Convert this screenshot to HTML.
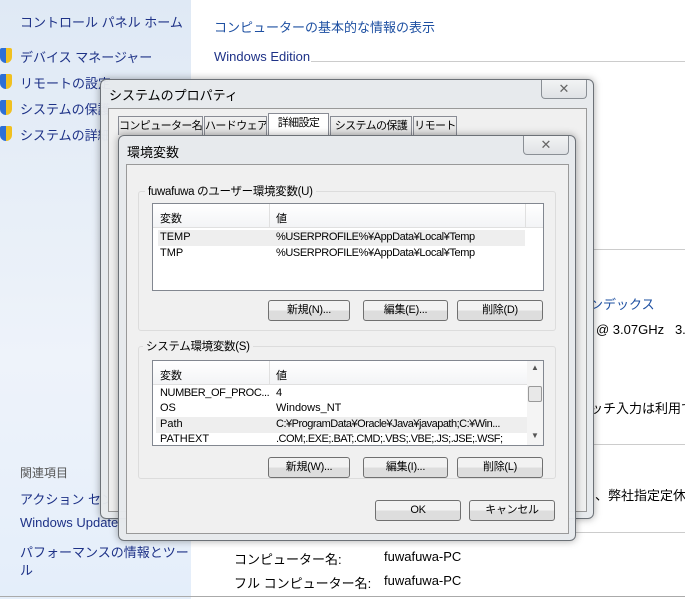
<!DOCTYPE html><html><head><meta charset="utf-8"><style>
*{margin:0;padding:0;box-sizing:border-box}
body{width:685px;height:599px;overflow:hidden;position:relative;background:#fff;font-family:"Liberation Sans","Noto Sans CJK JP",sans-serif;font-size:12px;color:#000}
.a{position:absolute;white-space:nowrap}
.left{position:absolute;left:0;top:0;width:191px;height:599px;background:linear-gradient(#dfe9f5,#eef3fa 60%,#e4eefa)}
.lk{color:#1e3287;font-size:13px}
.sh{position:absolute;left:0;width:12px;height:15px;background:linear-gradient(90deg,#2d6fd6 50%,#f0c020 50%);border-radius:2px 2px 6px 6px}
.frame{position:absolute;background:rgba(230,233,236,.97);border:1px solid #6c7177;border-radius:6px;box-shadow:0 0 8px rgba(0,0,0,.35)}
.client{position:absolute;background:#f0f0f0;border:1px solid #999}
.xb{position:absolute;width:46px;height:19px;border:1px solid #8a8f95;border-top:none;border-radius:0 0 4px 4px;background:linear-gradient(#f2f3f4,#dfe2e5);text-align:center;font-size:13px;line-height:17px;color:#666}
.btn{position:absolute;height:21px;border:1px solid #707070;border-radius:3px;background:linear-gradient(#f2f2f2 50%,#dddddd 50%);text-align:center;line-height:19px;font-size:11px;letter-spacing:-.3px}
.grp{position:absolute;border:1px solid #dcdcdc;border-radius:3px}
.gl{position:absolute;background:#f0f0f0;padding:0 3px;top:-9px;left:6px;font-size:11.5px;letter-spacing:-.3px}
.lv{position:absolute;background:#fff;border:1px solid #828790;overflow:hidden;font-size:11px}
.lv .a{overflow:hidden}
.hd{position:absolute;left:0;top:0;height:24px;background:linear-gradient(#fff,#f3f4f6);border-bottom:1px solid #e0e0e0}
.tab{position:absolute;top:116px;height:19px;border:1px solid #898c95;border-bottom:none;background:linear-gradient(#f2f2f2,#e0e0e0);font-size:11px;line-height:18px;text-align:center;letter-spacing:-.6px;overflow:hidden;white-space:nowrap}
</style></head><body>
<div class="left"></div>
<div class="a" style="left:20px;top:12px;font-size:13px;color:#1e3287">コントロール パネル ホーム</div>
<div class="sh" style="top:48px"></div><div class="a lk" style="left:20px;top:47px">デバイス マネージャー</div>
<div class="sh" style="top:74px"></div><div class="a lk" style="left:20px;top:73px">リモートの設定</div>
<div class="sh" style="top:100px"></div><div class="a lk" style="left:20px;top:99px">システムの保護</div>
<div class="sh" style="top:126px"></div><div class="a lk" style="left:20px;top:125px">システムの詳細</div>
<div class="a" style="left:20px;top:464px;color:#555;font-size:12px">関連項目</div>
<div class="a lk" style="left:20px;top:489px">アクション センター</div>
<div class="a lk" style="left:20px;top:515px">Windows Update</div>
<div class="a lk" style="left:20px;top:542px">パフォーマンスの情報とツー</div>
<div class="a lk" style="left:20px;top:560px">ル</div>
<div class="a" style="left:214px;top:17px;font-size:13px;color:#1e50a2">コンピューターの基本的な情報の表示</div>
<div class="a" style="left:214px;top:49px;font-size:13px;color:#1e3287">Windows Edition</div>
<div class="a" style="left:311px;top:61px;width:374px;border-top:1px solid #ccc"></div>
<div class="a" style="left:590px;top:249px;width:95px;border-top:1px solid #ccc"></div>
<div class="a" style="left:590px;top:294px;font-size:13px;color:#1e50a2">ンデックス</div>
<div class="a" style="left:596px;top:322px;font-size:13px">@ 3.07GHz &nbsp; 3.0</div>
<div class="a" style="left:590px;top:398px;font-size:13px">ッチ入力は利用で</div>
<div class="a" style="left:590px;top:444px;width:95px;border-top:1px solid #ccc"></div>
<div class="a" style="left:595px;top:485px;font-size:13px">、弊社指定定休日</div>
<div class="a" style="left:190px;top:532px;width:495px;border-top:1px solid #ccc"></div>
<div class="a" style="left:234px;top:549px;font-size:13px">コンピューター名:</div>
<div class="a" style="left:384px;top:549px;font-size:13px">fuwafuwa-PC</div>
<div class="a" style="left:234px;top:573px;font-size:13px">フル コンピューター名:</div>
<div class="a" style="left:384px;top:573px;font-size:13px">fuwafuwa-PC</div>
<div class="a" style="left:0;top:596px;width:685px;border-top:1px solid #aaa"></div>

<div class="frame" style="left:100px;top:79px;width:494px;height:440px">
 <div class="a" style="left:8px;top:5px;font-size:13px">システムのプロパティ</div>
 <div class="xb" style="left:440px;top:0">✕</div>
 <div class="client" style="left:7px;top:28px;width:479px;height:404px"></div>
</div>
<div class="tab" style="left:118px;width:85px">コンピューター名</div>
<div class="tab" style="left:204px;width:63px">ハードウェア</div>
<div class="tab" style="left:268px;top:113px;height:22px;width:61px;background:#fff">詳細設定</div>
<div class="tab" style="left:330px;width:82px">システムの保護</div>
<div class="tab" style="left:413px;width:44px">リモート</div>

<div class="frame" style="left:118px;top:135px;width:458px;height:406px">
 <div class="a" style="left:8px;top:6px;font-size:13px">環境変数</div>
 <div class="xb" style="left:404px;top:0">✕</div>
 <div class="client" style="left:7px;top:28px;width:443px;height:370px"></div>
</div>
<div class="grp" style="left:138px;top:191px;width:418px;height:140px"><div class="gl">fuwafuwa のユーザー環境変数(U)</div></div>
<div class="lv" style="left:152px;top:203px;width:392px;height:88px">
 <div class="hd" style="width:390px"></div>
 <div class="a" style="left:116px;top:0;height:24px;border-left:1px solid #e0e0e0"></div>
 <div class="a" style="left:372px;top:0;height:24px;border-left:1px solid #e0e0e0"></div>
 <div class="a" style="left:7px;top:6px">変数</div><div class="a" style="left:123px;top:6px">値</div>
 <div class="a" style="left:5px;top:26px;width:367px;height:16px;background:#eeeeee"></div>
 <div class="a" style="left:7px;top:27px">TEMP</div><div class="a" style="left:123px;top:27px;letter-spacing:-.4px">%USERPROFILE%¥AppData¥Local¥Temp</div>
 <div class="a" style="left:7px;top:43px">TMP</div><div class="a" style="left:123px;top:43px;letter-spacing:-.4px">%USERPROFILE%¥AppData¥Local¥Temp</div>
</div>
<div class="btn" style="left:268px;top:300px;width:82px">新規(N)...</div>
<div class="btn" style="left:363px;top:300px;width:85px">編集(E)...</div>
<div class="btn" style="left:457px;top:300px;width:86px">削除(D)</div>

<div class="grp" style="left:138px;top:346px;width:418px;height:133px"><div class="gl" style="left:4px">システム環境変数(S)</div></div>
<div class="lv" style="left:152px;top:360px;width:392px;height:86px">
 <div class="hd" style="width:375px"></div>
 <div class="a" style="left:116px;top:0;height:24px;border-left:1px solid #e0e0e0"></div>
 <div class="a" style="left:7px;top:6px">変数</div><div class="a" style="left:123px;top:6px">値</div>
 <div class="a" style="left:7px;top:26px;width:110px;letter-spacing:-.4px">NUMBER_OF_PROC...</div><div class="a" style="left:123px;top:26px">4</div>
 <div class="a" style="left:7px;top:41px">OS</div><div class="a" style="left:123px;top:41px">Windows_NT</div>
 <div class="a" style="left:3px;top:56px;width:371px;height:16px;background:#eeeeee"></div>
 <div class="a" style="left:7px;top:57px">Path</div><div class="a" style="left:123px;top:57px;width:250px;letter-spacing:-.5px">C:¥ProgramData¥Oracle¥Java¥javapath;C:¥Win...</div>
 <div class="a" style="left:7px;top:72px">PATHEXT</div><div class="a" style="left:123px;top:72px;width:250px;letter-spacing:-.5px">.COM;.EXE;.BAT;.CMD;.VBS;.VBE;.JS;.JSE;.WSF;</div>
 <div class="a" style="left:374px;top:0;width:16px;height:84px;background:#f4f4f4"></div>
 <div class="a" style="left:378px;top:2px;font-size:8px;color:#555">▲</div>
 <div class="a" style="left:375px;top:25px;width:14px;height:16px;border:1px solid #999;border-radius:2px;background:#e8e8e8"></div>
 <div class="a" style="left:378px;top:70px;font-size:8px;color:#555">▼</div>
</div>
<div class="btn" style="left:268px;top:457px;width:82px">新規(W)...</div>
<div class="btn" style="left:363px;top:457px;width:85px">編集(I)...</div>
<div class="btn" style="left:457px;top:457px;width:86px">削除(L)</div>
<div class="btn" style="left:375px;top:500px;width:86px">OK</div>
<div class="btn" style="left:469px;top:500px;width:86px">キャンセル</div>
</body></html>
